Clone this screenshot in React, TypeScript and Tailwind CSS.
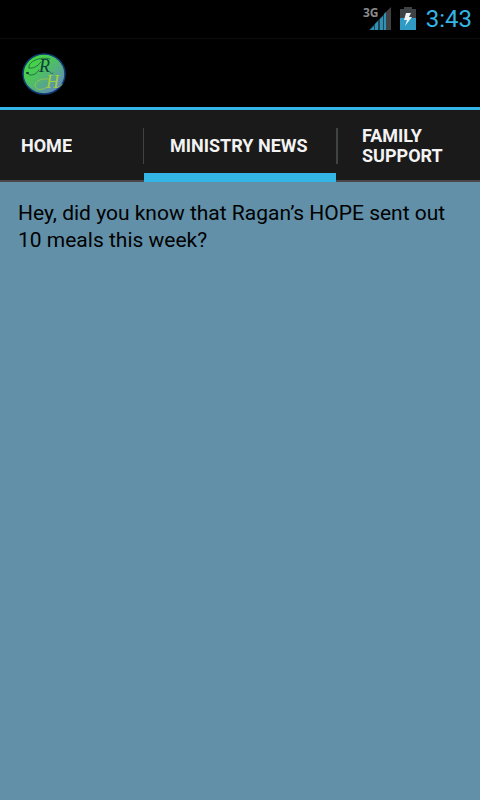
import { useState } from "react";
import clsx from "clsx";

const tabs = [
  {
    id: "home",
    label: "HOME",
    message: "",
  },
  {
    id: "news",
    label: "MINISTRY NEWS",
    message: "Hey, did you know that Ragan’s HOPE sent out 10 meals this week?",
  },
  {
    id: "family",
    label: "FAMILY SUPPORT",
    message: "",
  },
];

export default function App() {
  const [activeTab, setActiveTab] = useState("news");
  const current = tabs.find((tab) => tab.id === activeTab);

  return (
    <div className="flex min-h-screen flex-col bg-[#6190a8] font-['Roboto',sans-serif]">
      <StatusBar />

      <header className="flex h-[71px] items-center border-b-3 border-[#33b5e5] bg-black px-5">
        <Logo />
      </header>

      <nav role="tablist" className="grid h-[72px] grid-cols-[3fr_4fr_3fr] bg-[#1a1a1a]">
        {tabs.map((tab, index) => (
          <button
            key={tab.id}
            id={`tab-${tab.id}`}
            type="button"
            role="tab"
            aria-selected={tab.id === activeTab}
            aria-controls="tab-panel"
            onClick={() => setActiveTab(tab.id)}
            className={clsx(
              "relative flex min-w-0 items-center text-left text-lg leading-5 font-bold text-[#f3f3f3]",
              index === 0 ? "px-[21px]" : "px-[26px]",
              tab.id === "news" && "whitespace-nowrap"
            )}
          >
            {index > 0 && (
              <span
                className={clsx(
                  "absolute top-[18px] h-9 bg-[#404343]",
                  index === 1 ? "-left-px w-px" : "left-0 w-0.5"
                )}
              />
            )}
            <span className="overflow-hidden">{tab.label}</span>
            <span
              className={clsx(
                "absolute inset-x-0 bottom-0",
                tab.id === activeTab ? "h-[9px] bg-[#33b5e5]" : "h-0.5 bg-[#4b4749]"
              )}
            />
          </button>
        ))}
      </nav>

      <main
        id="tab-panel"
        role="tabpanel"
        aria-labelledby={`tab-${activeTab}`}
        className="flex-1 px-[18px] py-[18px]"
      >
        <p className="text-[21px] leading-[27px] text-black">{current?.message}</p>
      </main>
    </div>
  );
}

function StatusBar() {
  return (
    <div className="flex h-[39px] items-center justify-end border-b border-[#0c0c0c] bg-black pr-2">
      <SignalIcon />
      <BatteryIcon />
      <span className="ml-[10px] text-2xl text-[#33b5e5]">3:43</span>
    </div>
  );
}

function SignalIcon() {
  return (
    <svg width="31" height="36" viewBox="-2 -5 31 36" aria-label="3G signal">
      <path d="M6 24 L23 6 V24 Z" fill="#1f4656" />
      <path d="M7 24 L11 20 V24 Z M12 18 L15 15 V24 H12 Z M17 13 L20 10 V24 H17 Z M21 8 L23 6 V24 H21 Z" fill="#3091b5" />
      <path d="M23 6 L28 1 V24 H23 Z" fill="#414141" />
      <path d="M0 0 H15 V12 H0 Z" fill="#000" />
      <text x="0" y="11" fontSize="12" fontWeight="700" fontFamily="Open Sans, sans-serif" fill="#8a8a8a">
        3G
      </text>
    </svg>
  );
}

function BatteryIcon() {
  return (
    <svg className="ml-2" width="16" height="26" viewBox="0 0 16 26" aria-label="Battery charging">
      <path d="M4 1 H12 V3 H16 V24 H0 V3 H4 Z" fill="#3f4244" />
      <path d="M0 12 H16 V24 H0 Z" fill="#2f9bc4" />
      <path d="M6 7 H11 L9 11 H12 L5 20 L7 14 H4 Z" fill="#eef3f5" />
    </svg>
  );
}

function Logo() {
  return (
    <svg width="48" height="48" viewBox="0 0 48 48" aria-label="Ragan's HOPE">
      <defs>
        <linearGradient id="logo-fill" x1="0.1" y1="0.1" x2="0.85" y2="0.9">
          <stop offset="0" stopColor="#40de3c" />
          <stop offset="0.4" stopColor="#4cc45c" />
          <stop offset="1" stopColor="#6288be" />
        </linearGradient>
      </defs>
      <ellipse cx="24" cy="25" rx="21" ry="20" fill="url(#logo-fill)" stroke="#123b78" strokeWidth="1.5" />
      <text fontSize="18" fontStyle="italic" fontFamily="Liberation Serif, serif">
        <tspan x="19" y="23" fill="#0d4038">
          R
        </tspan>
        <tspan x="26" y="39" fill="#a3d038">
          H
        </tspan>
      </text>
      {/* pen flourishes */}
      <g fill="none" strokeLinecap="round">
        <path
          d="M19 21 C16 26 10 28 7 24 M9 19 C7 13 20 7 30 10 M9 19 C13 20 18 17 21 13 M30 23 C31 25 32 25 33 24"
          stroke="#1b5a40"
          strokeWidth="0.8"
        />
        <path d="M7 24 H8" stroke="#0d4038" strokeWidth="2" />
        <path
          d="M27 38 C22 42 16 41 15 37 C15 32 21 29 29 30 M38 38 C40 38 41 37 42 35"
          stroke="#9ccb3c"
          strokeWidth="0.8"
        />
      </g>
    </svg>
  );
}
